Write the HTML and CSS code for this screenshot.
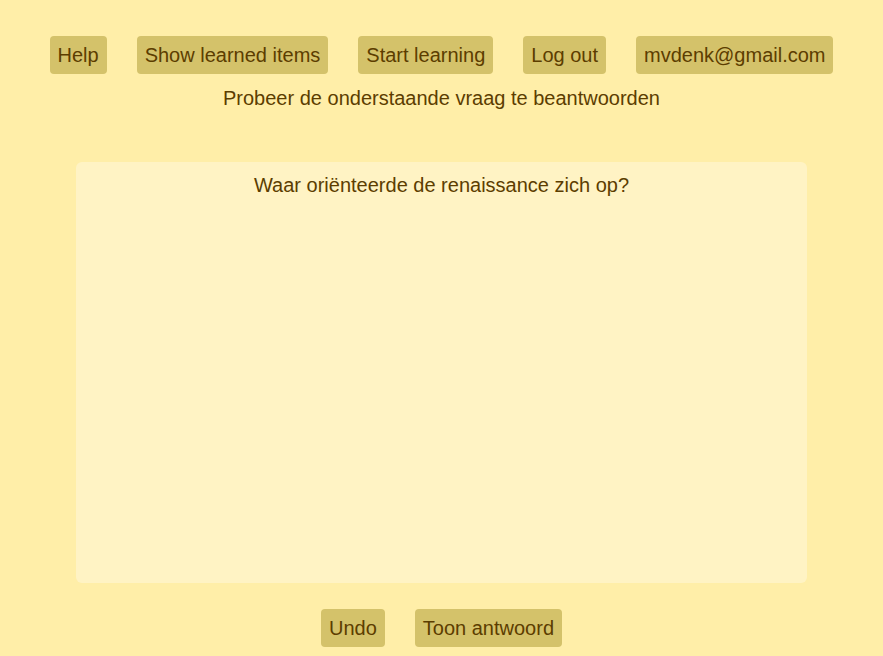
FILE: index.html
```html
<!DOCTYPE html>
<html>
<head>
<meta charset="utf-8">
<link rel="stylesheet" href="styles.css">
</head>
<body>
<div class="page">
  <nav class="nav">
    <button class="btn">Help</button>
    <button class="btn">Show learned items</button>
    <button class="btn">Start learning</button>
    <button class="btn">Log out</button>
    <button class="btn">mvdenk@gmail.com</button>
  </nav>
  <p class="subtitle">Probeer de onderstaande vraag te beantwoorden</p>
  <div class="card">
    <p class="question">Waar oriënteerde de renaissance zich op?</p>
  </div>
  <div class="actions">
    <button class="btn">Undo</button>
    <button class="btn">Toon antwoord</button>
  </div>
</div>
</body>
</html>
```

FILE: styles.css
```css
html, body {
  margin: 0;
  padding: 0;
  background: #ffeea8;
}
body {
  font-family: "Liberation Sans", Arial, sans-serif;
  color: #5c3d00;
  font-size: 20px;
}
.page {
  display: flex;
  flex-direction: column;
  align-items: center;
  padding-top: 36px;
}
.nav, .actions {
  display: flex;
  justify-content: center;
  gap: 30px;
}
.btn {
  font-family: inherit;
  font-size: 20px;
  line-height: 22px;
  color: #5c3d00;
  background: #d4c26a;
  border: none;
  border-radius: 4px;
  padding: 8px 8px;
  margin: 0;
}
.subtitle {
  margin: 12px 0 0;
  line-height: 24px;
}
.card {
  margin-top: 52px;
  width: 731px;
  height: 421px;
  background: #fff3c4;
  border-radius: 6px;
  box-sizing: border-box;
  padding-top: 11px;
}
.question {
  margin: 0;
  text-align: center;
  line-height: 24px;
}
.actions {
  margin-top: 26px;
}
```
